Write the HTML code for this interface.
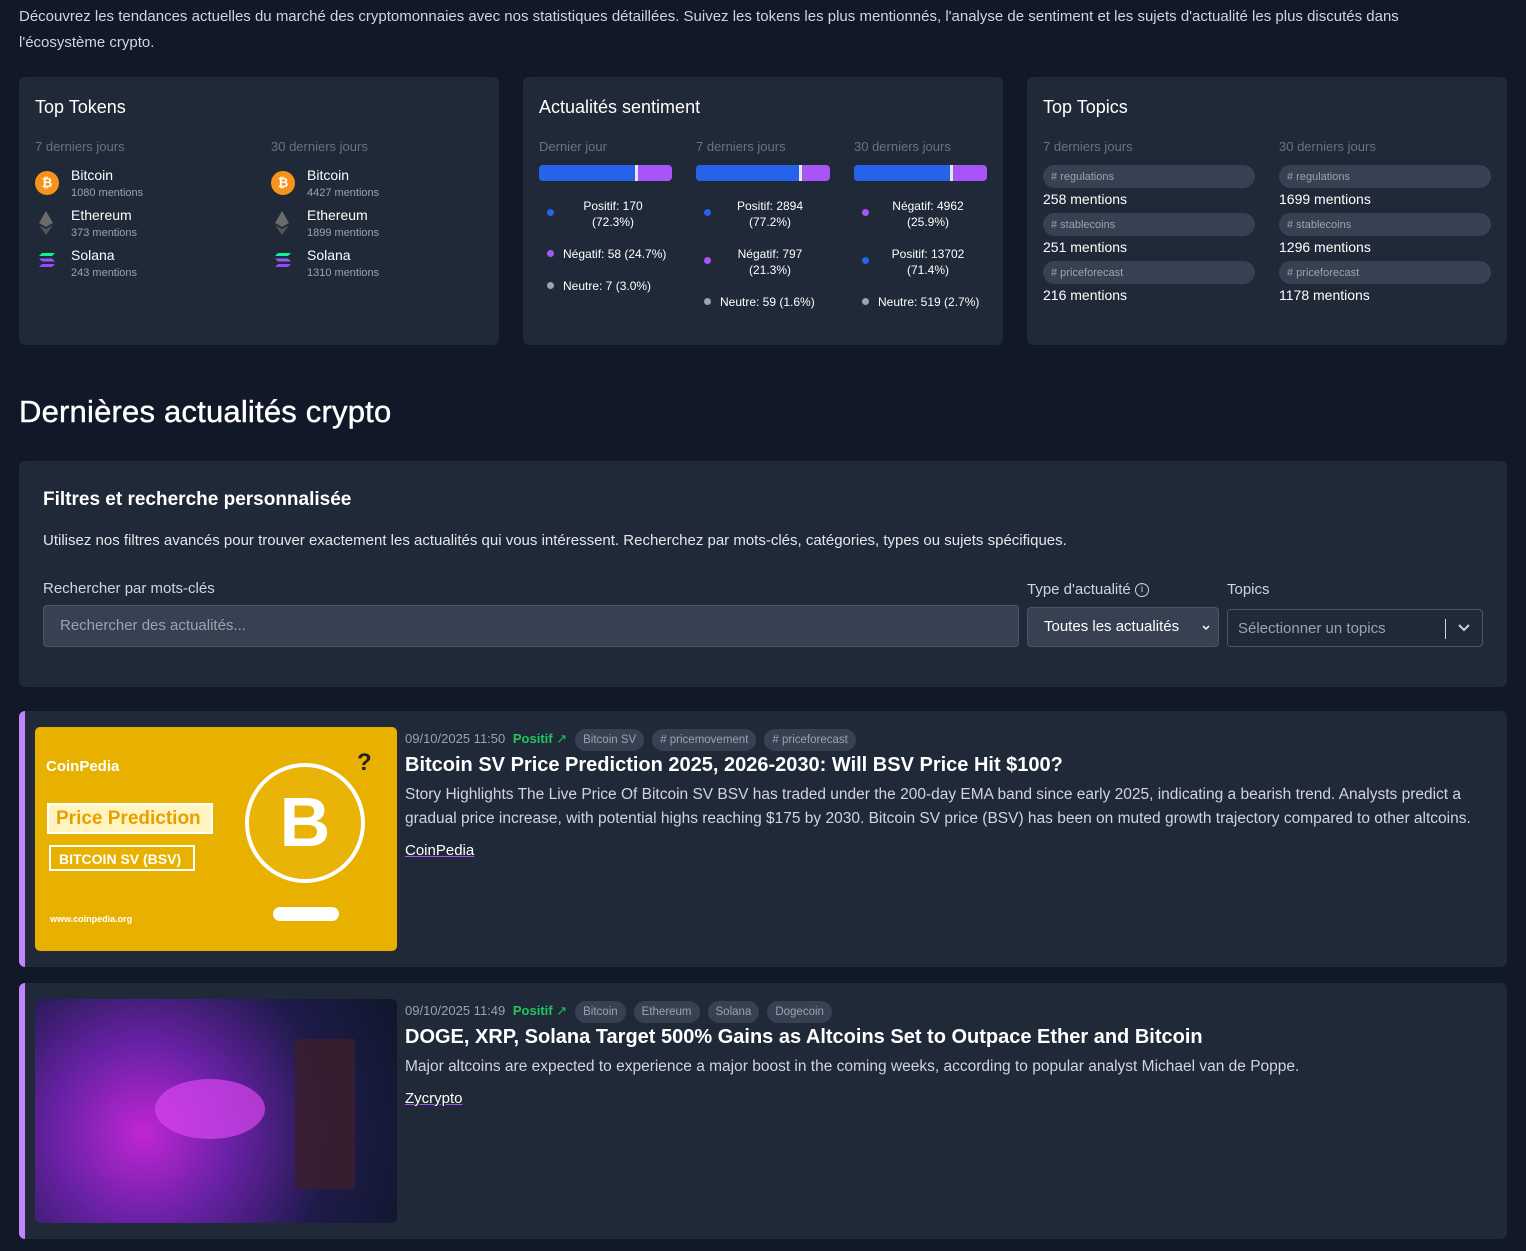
<!DOCTYPE html>
<html><head><meta charset="utf-8"><style>
*{box-sizing:border-box;margin:0;padding:0}
body{width:1526px;height:1251px;background:#111827;font-family:"Liberation Sans",sans-serif;color:#e5e7eb;position:relative;overflow:hidden}
.a{position:absolute}
.card{position:absolute;background:#1f2937;border-radius:6px}
.h{font-size:18px;color:#fff;font-weight:500}
.sub{font-size:13px;color:#6b7280}
.tn{font-size:14px;color:#fff}
.tm{font-size:11px;color:#9ca3af}
.pill{position:absolute;background:#374151;border-radius:12px;height:23px;font-size:11px;color:#9ca3af;padding:6px 8px 0;width:212px}
.mm{position:absolute;font-size:14px;color:#fff}
.bar{position:absolute;height:16px;border-radius:4px;overflow:hidden;background:#a855f7}
.bar i{position:absolute;left:0;top:0;bottom:0;background:#2563eb;border-right:3px solid #e5e7eb}
.dot{position:absolute;width:7px;height:7px;border-radius:50%}
.lg{position:absolute;font-size:12px;color:#fff;text-align:center;line-height:16px}
.tag{display:inline-block;background:#374151;border-radius:11px;font-size:11.5px;color:#9ca3af;padding:5px 8px;margin-left:8px}
</style></head><body>
<div class="a" style="left:19px;top:4px;width:1470px;font-size:15px;line-height:26px;color:#d1d5db">Découvrez les tendances actuelles du marché des cryptomonnaies avec nos statistiques détaillées. Suivez les tokens les plus mentionnés, l'analyse de sentiment et les sujets d'actualité les plus discutés dans l'écosystème crypto.</div>

<div class="card" style="left:19px;top:77px;width:480px;height:268px">
<div class="a h" style="left:16px;top:20px">Top Tokens</div>
<div class="a sub" style="left:16px;top:62px">7 derniers jours</div>
<div class="a sub" style="left:252px;top:62px">30 derniers jours</div>
</div>
<div class="a" style="left:35px;top:171px;width:24px;height:24px;border-radius:50%;background:#f7931a;color:#fff;font-size:13px;font-weight:bold;text-align:center;line-height:24px">₿</div>
<div class="a" style="left:271px;top:171px;width:24px;height:24px;border-radius:50%;background:#f7931a;color:#fff;font-size:13px;font-weight:bold;text-align:center;line-height:24px">₿</div>
<svg class="a" style="left:38px;top:211px" width="16" height="24"><path d="M8 0L1 12L8 16L15 12Z" fill="#6b6b6b"/><path d="M1 14L8 24L15 14L8 18Z" fill="#555"/></svg>
<svg class="a" style="left:274px;top:211px" width="16" height="24"><path d="M8 0L1 12L8 16L15 12Z" fill="#6b6b6b"/><path d="M1 14L8 24L15 14L8 18Z" fill="#555"/></svg>
<svg class="a" style="left:39px;top:253px" width="16" height="14"><path d="M3 0H16L13 3H0Z" fill="#14f195"/><path d="M0 5.5H13L16 8.5H3Z" fill="#8b5cf6"/><path d="M3 11H16L13 14H0Z" fill="#9945ff"/></svg>
<svg class="a" style="left:275px;top:253px" width="16" height="14"><path d="M3 0H16L13 3H0Z" fill="#14f195"/><path d="M0 5.5H13L16 8.5H3Z" fill="#8b5cf6"/><path d="M3 11H16L13 14H0Z" fill="#9945ff"/></svg>
<div class="a tn" style="left:71px;top:167px">Bitcoin</div><div class="a tm" style="left:71px;top:187px">1080 mentions</div>
<div class="a tn" style="left:71px;top:207px">Ethereum</div><div class="a tm" style="left:71px;top:227px">373 mentions</div>
<div class="a tn" style="left:71px;top:247px">Solana</div><div class="a tm" style="left:71px;top:267px">243 mentions</div>
<div class="a tn" style="left:307px;top:167px">Bitcoin</div><div class="a tm" style="left:307px;top:187px">4427 mentions</div>
<div class="a tn" style="left:307px;top:207px">Ethereum</div><div class="a tm" style="left:307px;top:227px">1899 mentions</div>
<div class="a tn" style="left:307px;top:247px">Solana</div><div class="a tm" style="left:307px;top:267px">1310 mentions</div>

<div class="card" style="left:523px;top:77px;width:480px;height:268px">
<div class="a h" style="left:16px;top:20px">Actualités sentiment</div>
<div class="a sub" style="left:16px;top:62px">Dernier jour</div>
<div class="a sub" style="left:173px;top:62px">7 derniers jours</div>
<div class="a sub" style="left:331px;top:62px">30 derniers jours</div>
<div class="bar" style="left:16px;top:88px;width:133px"><i style="width:99px"></i></div>
<div class="bar" style="left:173px;top:88px;width:134px"><i style="width:106px"></i></div>
<div class="bar" style="left:331px;top:88px;width:133px"><i style="width:99px"></i></div>
<div class="dot" style="left:24px;top:132px;background:#2563eb"></div>
<div class="lg" style="left:40px;top:121px;width:100px">Positif: 170<br>(72.3%)</div>
<div class="dot" style="left:24px;top:173px;background:#a855f7"></div>
<div class="lg" style="left:40px;top:169px">Négatif: 58 (24.7%)</div>
<div class="dot" style="left:24px;top:205px;background:#9ca3af"></div>
<div class="lg" style="left:40px;top:201px">Neutre: 7 (3.0%)</div>
<div class="dot" style="left:181px;top:132px;background:#2563eb"></div>
<div class="lg" style="left:197px;top:121px;width:100px">Positif: 2894<br>(77.2%)</div>
<div class="dot" style="left:181px;top:180px;background:#a855f7"></div>
<div class="lg" style="left:197px;top:169px;width:100px">Négatif: 797<br>(21.3%)</div>
<div class="dot" style="left:181px;top:221px;background:#9ca3af"></div>
<div class="lg" style="left:197px;top:217px">Neutre: 59 (1.6%)</div>
<div class="dot" style="left:339px;top:132px;background:#a855f7"></div>
<div class="lg" style="left:355px;top:121px;width:100px">Négatif: 4962<br>(25.9%)</div>
<div class="dot" style="left:339px;top:180px;background:#2563eb"></div>
<div class="lg" style="left:355px;top:169px;width:100px">Positif: 13702<br>(71.4%)</div>
<div class="dot" style="left:339px;top:221px;background:#9ca3af"></div>
<div class="lg" style="left:355px;top:217px">Neutre: 519 (2.7%)</div>
</div>

<div class="card" style="left:1027px;top:77px;width:480px;height:268px">
<div class="a h" style="left:16px;top:20px">Top Topics</div>
<div class="a sub" style="left:16px;top:62px">7 derniers jours</div>
<div class="a sub" style="left:252px;top:62px">30 derniers jours</div>
<div class="pill" style="left:16px;top:88px"># regulations</div><div class="mm" style="left:16px;top:114px">258 mentions</div>
<div class="pill" style="left:16px;top:136px"># stablecoins</div><div class="mm" style="left:16px;top:162px">251 mentions</div>
<div class="pill" style="left:16px;top:184px"># priceforecast</div><div class="mm" style="left:16px;top:210px">216 mentions</div>
<div class="pill" style="left:252px;top:88px"># regulations</div><div class="mm" style="left:252px;top:114px">1699 mentions</div>
<div class="pill" style="left:252px;top:136px"># stablecoins</div><div class="mm" style="left:252px;top:162px">1296 mentions</div>
<div class="pill" style="left:252px;top:184px"># priceforecast</div><div class="mm" style="left:252px;top:210px">1178 mentions</div>
</div>

<div class="a" style="left:19px;top:394px;font-size:31px;color:#fff;font-weight:500;letter-spacing:0.2px;-webkit-text-stroke:0.4px #fff">Dernières actualités crypto</div>

<div class="card" style="left:19px;top:461px;width:1488px;height:226px">
<div class="a" style="left:24px;top:28px;font-size:19px;font-weight:bold;color:#fff">Filtres et recherche personnalisée</div>
<div class="a" style="left:24px;top:71px;font-size:15px;color:#e5e7eb">Utilisez nos filtres avancés pour trouver exactement les actualités qui vous intéressent. Recherchez par mots-clés, catégories, types ou sujets spécifiques.</div>
<div class="a" style="left:24px;top:119px;font-size:15px;color:#d1d5db">Rechercher par mots-clés</div>
<div class="a" style="left:24px;top:144px;width:976px;height:42px;background:#374151;border:1px solid #4b5563;border-radius:4px;padding:11px 16px;font-size:15px;color:#9ca3af">Rechercher des actualités...</div>
<div class="a" style="left:1008px;top:120px;font-size:15px;color:#d1d5db">Type d'actualité <span style="display:inline-block;width:14px;height:14px;border:1px solid #d1d5db;border-radius:50%;font-size:10px;text-align:center;line-height:12px;vertical-align:2px">i</span></div>
<div class="a" style="left:1008px;top:146px;width:192px;height:40px;background:#374151;border:1px solid #4b5563;border-radius:4px;padding:10px 16px;font-size:15px;color:#fff">Toutes les actualités <svg style="position:absolute;right:8px;top:17px" width="8" height="6"><path d="M1 1L4 4L7 1" stroke="#fff" stroke-width="1.5" fill="none"/></svg></div>
<div class="a" style="left:1208px;top:120px;font-size:15px;color:#d1d5db">Topics</div>
<div class="a" style="left:1208px;top:148px;width:256px;height:38px;background:#1f2937;border:1px solid #4b5563;border-radius:4px;padding:10px 10px;font-size:15px;color:#9ca3af">Sélectionner un topics<span style="position:absolute;left:217px;top:9px;width:1px;height:20px;background:#d1d5db"></span><svg style="position:absolute;right:12px;top:14px" width="12" height="8"><path d="M1 1L6 6L11 1" stroke="#d1d5db" stroke-width="2" fill="none"/></svg></div>
</div>

<div class="card" style="left:19px;top:711px;width:1488px;height:256px;border-left:6px solid #c084fc">
<div class="a" style="left:10px;top:16px;width:362px;height:224px;background:#e8b100;border-radius:5px;overflow:hidden">
<div class="a" style="left:11px;top:31px;font-size:15px;color:#fff;font-weight:bold">CoinPedia</div>
<div class="a" style="left:12px;top:76px;width:166px;height:31px;background:#fff3c0;border:2px solid #fff;color:#e8a000;font-size:19px;font-weight:bold;padding:3px 7px">Price Prediction</div>
<div class="a" style="left:14px;top:118px;width:146px;height:26px;border:2px solid #fff;color:#fff;font-size:14px;font-weight:bold;padding:4px 8px">BITCOIN SV (BSV)</div>
<div class="a" style="left:210px;top:36px;width:120px;height:120px;border-radius:50%;border:4px solid #fff;background:#eab308;color:#fff;font-size:70px;font-weight:bold;text-align:center;line-height:110px">B</div>
<div class="a" style="left:238px;top:180px;width:66px;height:14px;background:#fff;border-radius:7px"></div>
<div class="a" style="left:15px;top:187px;font-size:9px;color:#fff;font-weight:bold">www.coinpedia.org</div>
<div class="a" style="left:322px;top:22px;font-size:24px;color:#222;font-weight:bold">?</div>
</div>
<div class="a" style="left:380px;top:18px;font-size:13px;color:#9ca3af;white-space:nowrap">09/10/2025 11:50 <b style="color:#22c55e;margin-left:4px">Positif</b> <span style="color:#22c55e">↗</span><span class="tag">Bitcoin SV</span><span class="tag"># pricemovement</span><span class="tag"># priceforecast</span></div>
<div class="a" style="left:380px;top:43px;font-size:20px;font-weight:bold;color:#fff">Bitcoin SV Price Prediction 2025, 2026-2030: Will BSV Price Hit $100?</div>
<div class="a" style="left:380px;top:72px;width:1090px;font-size:15.5px;line-height:24px;color:#d1d5db">Story Highlights The Live Price Of Bitcoin SV BSV has traded under the 200-day EMA band since early 2025, indicating a bearish trend. Analysts predict a gradual price increase, with potential highs reaching $175 by 2030. Bitcoin SV price (BSV) has been on muted growth trajectory compared to other altcoins.</div>
<div class="a" style="left:380px;top:131px;font-size:15px;color:#fff;text-decoration:underline;text-decoration-color:#a855f7">CoinPedia</div>
</div>

<div class="card" style="left:19px;top:983px;width:1488px;height:256px;border-left:6px solid #c084fc">
<div class="a" style="left:10px;top:16px;width:362px;height:224px;border-radius:5px;overflow:hidden;background:radial-gradient(circle at 30% 60%,#c026d3 0,#6b21a8 30%,#1e1b4b 65%,#0f172a 100%)">
<div class="a" style="left:120px;top:80px;width:110px;height:60px;border-radius:50%;background:#d946ef;opacity:.7"></div>
<div class="a" style="left:260px;top:40px;width:60px;height:150px;background:#3b1f2b;opacity:.8"></div>
</div>
<div class="a" style="left:380px;top:18px;font-size:13px;color:#9ca3af;white-space:nowrap">09/10/2025 11:49 <b style="color:#22c55e;margin-left:4px">Positif</b> <span style="color:#22c55e">↗</span><span class="tag">Bitcoin</span><span class="tag">Ethereum</span><span class="tag">Solana</span><span class="tag">Dogecoin</span></div>
<div class="a" style="left:380px;top:43px;font-size:20px;font-weight:bold;color:#fff">DOGE, XRP, Solana Target 500% Gains as Altcoins Set to Outpace Ether and Bitcoin</div>
<div class="a" style="left:380px;top:72px;width:1090px;font-size:15.5px;line-height:24px;color:#d1d5db">Major altcoins are expected to experience a major boost in the coming weeks, according to popular analyst Michael van de Poppe.</div>
<div class="a" style="left:380px;top:107px;font-size:15px;color:#fff;text-decoration:underline;text-decoration-color:#a855f7">Zycrypto</div>
</div>
</body></html>
